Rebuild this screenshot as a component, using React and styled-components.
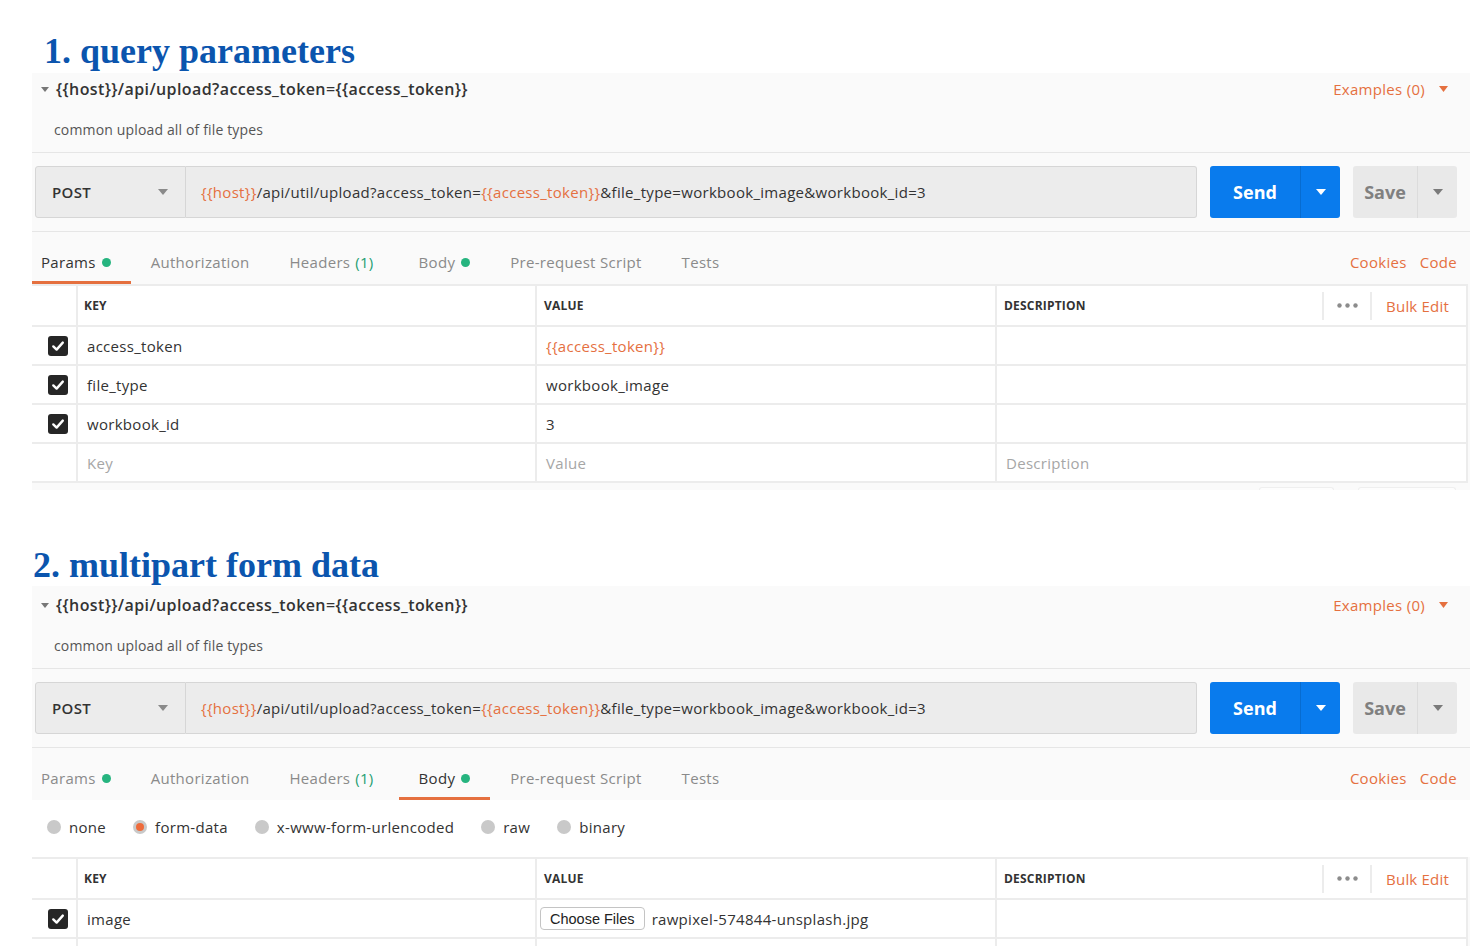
import React from "react";
import styled, { createGlobalStyle } from "styled-components";

const ORANGE = "#e5703f";
const GREEN = "#26b47f";
const LINE = "#ececec";

const GlobalStyle = createGlobalStyle`
  body {
    margin: 0;
    background: #fff;
    font-family: "Open Sans", "Liberation Sans", sans-serif;
    letter-spacing: 0.3px;
    color: #333;
  }
  * { box-sizing: border-box; }
`;

const Page = styled.div`
  width: 1473px;
  height: 946px;
  overflow: hidden;
`;

const Heading = styled.h1`
  margin: 0;
  padding: ${(p) => p.$top}px 0 ${(p) => p.$bottom}px ${(p) => p.$left}px;
  font-family: "Liberation Serif", "Times New Roman", serif;
  font-size: 36px;
  line-height: 36px;
  font-weight: 700;
  letter-spacing: 0;
  color: #0b55ae;
`;

const Panel = styled.div`
  margin-left: 32px;
  width: 1438px;
  background: #fafafa;
`;

const PanelHeader = styled.div`
  padding: ${(p) => p.$top}px 0 13px;
  border-bottom: 1px solid #e6e6e6;
`;

const TitleRow = styled.div`
  height: 32px;
  display: flex;
  align-items: center;
  padding: 0 22px 0 9px;
`;

const Title = styled.div`
  margin-left: 7px;
  font-size: 16px;
  font-weight: 600;
  letter-spacing: 0.4px;
  color: #333;
`;

const Examples = styled.div`
  margin-left: auto;
  display: flex;
  align-items: center;
  gap: 14px;
  font-size: 15px;
  color: ${ORANGE};
`;

const Description = styled.div`
  margin-top: 16px;
  line-height: 18px;
  padding-left: 22px;
  font-size: 14px;
  letter-spacing: 0.15px;
  color: #555;
`;

const UrlRow = styled.div`
  display: flex;
  padding: 13px 13px 13px 3px;
  border-bottom: 1px solid #e6e6e6;
`;

const Method = styled.div`
  width: 151px;
  height: 52px;
  display: flex;
  align-items: center;
  justify-content: space-between;
  padding: 0 17px 0 16px;
  background: #ececec;
  border: 1px solid #d6d6d6;
  border-radius: 3px 0 0 3px;
  font-size: 15px;
  font-weight: 600;
  color: #333;
`;

const UrlInput = styled.div`
  flex: 1;
  height: 52px;
  display: flex;
  align-items: center;
  padding-left: 15px;
  background: #ececec;
  border: 1px solid #d6d6d6;
  border-left: none;
  border-radius: 0 3px 3px 0;
  font-size: 15px;
  color: #333;
  white-space: nowrap;
`;

const Var = styled.span`
  color: ${ORANGE};
`;

const SplitButton = styled.div`
  margin-left: 13px;
  width: ${(p) => p.$width}px;
  height: 52px;
  display: flex;
  border-radius: 3px;
  background: ${(p) => (p.$primary ? "#097bed" : "#e9e9e9")};
`;

const ButtonLabel = styled.div`
  width: ${(p) => p.$width}px;
  display: flex;
  align-items: center;
  justify-content: center;
  font-size: 18px;
  font-weight: 700;
  letter-spacing: 0;
  color: ${(p) => (p.$primary ? "#fff" : "#808080")};
`;

const ButtonCaret = styled.div`
  flex: 1;
  display: flex;
  align-items: center;
  justify-content: center;
  border-left: 1px solid
    ${(p) => (p.$primary ? "rgba(0, 0, 0, 0.12)" : "#dcdcdc")};
`;

const TabsRow = styled.div`
  height: 52px;
  display: flex;
  align-items: stretch;
`;

const Tab = styled.div`
  display: flex;
  align-items: center;
  padding: 11px 20px 0 ${(p) => (p.$first ? 9 : 20)}px;
  border-bottom: 3px solid ${(p) => (p.$active ? ORANGE : "transparent")};
  font-size: 15px;
  color: ${(p) => (p.$active ? "#333" : "#8a8a8a")};
  white-space: nowrap;
`;

const Count = styled.span`
  margin: 0 5px 0 5px;
  color: #1f9e72;
`;

const Dot = styled.span`
  width: 9px;
  height: 9px;
  margin-left: 6px;
  border-radius: 50%;
  background: ${GREEN};
`;

const TabLinks = styled.div`
  margin-left: auto;
  display: flex;
  align-items: center;
  gap: 13px;
  padding: 11px 13px 3px 0;
  font-size: 15px;
  color: ${ORANGE};
`;

const RadioRow = styled.div`
  height: 57px;
  display: flex;
  align-items: center;
  gap: 27px;
  padding: 0 0 3px 15px;
  background: #fff;
`;

const RadioOption = styled.div`
  display: flex;
  align-items: center;
  gap: 8px;
  font-size: 15px;
  color: #333;
`;

const RadioCircle = styled.span`
  width: 14px;
  height: 14px;
  border-radius: 50%;
  background: #c9c9c9;
  display: flex;
  align-items: center;
  justify-content: center;
  &::after {
    content: "";
    width: 8px;
    height: 8px;
    border-radius: 50%;
    background: ${(p) => (p.$checked ? "#ee6b3b" : "transparent")};
  }
`;

const Table = styled.div`
  width: 1436px;
  background: #fff;
  border-top: 2px solid ${LINE};
  border-right: 2px solid ${LINE};
`;

const Row = styled.div`
  display: grid;
  grid-template-columns: 44px 459px 460px 1fr;
  height: ${(p) => (p.$header ? 41 : 39)}px;
  border-bottom: 2px solid ${LINE};
`;

const CheckCell = styled.div`
  display: flex;
  align-items: center;
  padding-left: 16px;
`;

const Cell = styled.div`
  display: flex;
  align-items: center;
  min-width: 0;
  padding-left: ${(p) => (p.$tight ? 3 : 9)}px;
  border-left: 2px solid ${LINE};
  font-size: 15px;
  color: ${(p) => (p.$placeholder ? "#a6a6a6" : p.$var ? ORANGE : "#333")};
  white-space: nowrap;
`;

const HeadCell = styled.div`
  display: flex;
  align-items: center;
  padding-left: ${(p) => (p.$first ? 6 : 7)}px;
  border-left: 2px solid ${LINE};
  font-size: 12px;
  font-weight: 700;
  letter-spacing: 0.2px;
  color: #333;
`;

const HeadTools = styled.div`
  margin-left: auto;
  display: flex;
  align-items: center;
  height: 100%;
`;

const ToolDivider = styled.span`
  width: 2px;
  height: 28px;
  background: ${LINE};
`;

const DotsButton = styled.div`
  width: 46px;
  display: flex;
  justify-content: center;
`;

const BulkEdit = styled.div`
  padding: 0 17px 0 14px;
  font-size: 15px;
  font-weight: 400;
  color: ${ORANGE};
`;

const Checkbox = styled.span`
  width: 20px;
  height: 20px;
  border-radius: 3px;
  background: #262626;
  display: flex;
  align-items: center;
  justify-content: center;
`;

const FileButton = styled.span`
  height: 23px;
  display: inline-flex;
  align-items: center;
  padding: 0 9px;
  margin-right: 7px;
  background: #fff;
  border: 1px solid #c4c4c4;
  border-radius: 4px;
  font-family: "Liberation Sans", Arial, sans-serif;
  font-size: 14.5px;
  letter-spacing: 0;
  color: #222;
`;

const Footer = styled.div`
  height: 7px;
  display: flex;
  justify-content: flex-end;
  align-items: flex-end;
  gap: 24px;
  padding-right: 14px;
`;

const GhostButton = styled.span`
  width: ${(p) => p.$width}px;
  height: 3px;
  border: 1px solid #efefef;
  border-bottom: none;
  border-radius: 3px 3px 0 0;
  background: #fdfdfd;
`;

const Caret = ({ color, w = 10, h = 6 }) => (
  <svg width={w} height={h} viewBox={`0 0 ${w} ${h}`}>
    <polygon points={`0,0 ${w},0 ${w / 2},${h}`} fill={color} />
  </svg>
);

const Check = () => (
  <svg width="14" height="14" viewBox="0 0 14 14">
    <path
      d="M2.3 7.4 L5.6 10.6 L11.8 3.6"
      fill="none"
      stroke="#fff"
      strokeWidth="2.4"
      strokeLinecap="round"
      strokeLinejoin="round"
    />
  </svg>
);

const Dots = () => (
  <svg width="21" height="5" viewBox="0 0 21 5">
    <circle cx="2.5" cy="2.5" r="2.2" fill="#8c8c8c" />
    <circle cx="10.5" cy="2.5" r="2.2" fill="#8c8c8c" />
    <circle cx="18.5" cy="2.5" r="2.2" fill="#8c8c8c" />
  </svg>
);

const TABS = [
  { label: "Params", dot: true },
  { label: "Authorization" },
  { label: "Headers", count: "(1)" },
  { label: "Body", dot: true },
  { label: "Pre-request Script" },
  { label: "Tests" },
];

const RequestHeader = ({ top }) => (
  <>
    <PanelHeader $top={top}>
      <TitleRow>
        <Caret color="#777" w={8} h={5} />
        <Title>{"{{host}}/api/upload?access_token={{access_token}}"}</Title>
        <Examples>
          Examples (0)
          <Caret color={ORANGE} w={9} h={6} />
        </Examples>
      </TitleRow>
      <Description>common upload all of file types</Description>
    </PanelHeader>
    <UrlRow>
      <Method>
        POST
        <Caret color="#8a8a8a" />
      </Method>
      <UrlInput>
        <Var>{"{{host}}"}</Var>/api/util/upload?access_token=
        <Var>{"{{access_token}}"}</Var>
        &amp;file_type=workbook_image&amp;workbook_id=3
      </UrlInput>
      <SplitButton $width={130} $primary>
        <ButtonLabel $width={90} $primary>
          Send
        </ButtonLabel>
        <ButtonCaret $primary>
          <Caret color="#fff" />
        </ButtonCaret>
      </SplitButton>
      <SplitButton $width={104}>
        <ButtonLabel $width={64}>Save</ButtonLabel>
        <ButtonCaret>
          <Caret color="#7a7a7a" />
        </ButtonCaret>
      </SplitButton>
    </UrlRow>
  </>
);

const Tabs = ({ active }) => (
  <TabsRow>
    {TABS.map((t, i) => (
      <Tab key={t.label} $first={i === 0} $active={t.label === active}>
        {t.label}
        {t.count && <Count>{t.count}</Count>}
        {t.dot && <Dot />}
      </Tab>
    ))}
    <TabLinks>
      <span>Cookies</span>
      <span>Code</span>
    </TabLinks>
  </TabsRow>
);

const HeaderRow = () => (
  <Row $header>
    <div />
    <HeadCell $first>KEY</HeadCell>
    <HeadCell>VALUE</HeadCell>
    <HeadCell>
      DESCRIPTION
      <HeadTools>
        <ToolDivider />
        <DotsButton>
          <Dots />
        </DotsButton>
        <ToolDivider />
        <BulkEdit>Bulk Edit</BulkEdit>
      </HeadTools>
    </HeadCell>
  </Row>
);

const PARAMS = [
  { key: "access_token", value: "{{access_token}}", isVar: true },
  { key: "file_type", value: "workbook_image" },
  { key: "workbook_id", value: "3" },
];

const BODY_TYPES = ["none", "form-data", "x-www-form-urlencoded", "raw", "binary"];

const App = () => {
  return (
    <Page>
      <GlobalStyle />

      <Heading $top={33} $bottom={4} $left={44}>
        1. query parameters
      </Heading>
      <Panel>
        <RequestHeader top={0} />
        <Tabs active="Params" />
        <Table>
          <HeaderRow />
          {PARAMS.map((p) => (
            <Row key={p.key}>
              <CheckCell>
                <Checkbox>
                  <Check />
                </Checkbox>
              </CheckCell>
              <Cell>{p.key}</Cell>
              <Cell $var={p.isVar}>{p.value}</Cell>
              <Cell />
            </Row>
          ))}
          <Row>
            <div />
            <Cell $placeholder>Key</Cell>
            <Cell $placeholder>Value</Cell>
            <Cell $placeholder>Description</Cell>
          </Row>
        </Table>
        <Footer>
          <GhostButton $width={75} />
          <GhostButton $width={98} />
        </Footer>
      </Panel>

      <Heading $top={57} $bottom={3} $left={33}>
        2. multipart form data
      </Heading>
      <Panel>
        <RequestHeader top={3} />
        <Tabs active="Body" />
        <RadioRow>
          {BODY_TYPES.map((b) => (
            <RadioOption key={b}>
              <RadioCircle $checked={b === "form-data"} />
              {b}
            </RadioOption>
          ))}
        </RadioRow>
        <Table>
          <HeaderRow />
          <Row>
            <CheckCell>
              <Checkbox>
                <Check />
              </Checkbox>
            </CheckCell>
            <Cell>image</Cell>
            <Cell $tight>
              <FileButton>Choose Files</FileButton>
              rawpixel-574844-unsplash.jpg
            </Cell>
            <Cell />
          </Row>
          <Row>
            <div />
            <Cell />
            <Cell />
            <Cell />
          </Row>
        </Table>
      </Panel>
    </Page>
  );
};

export default App;
